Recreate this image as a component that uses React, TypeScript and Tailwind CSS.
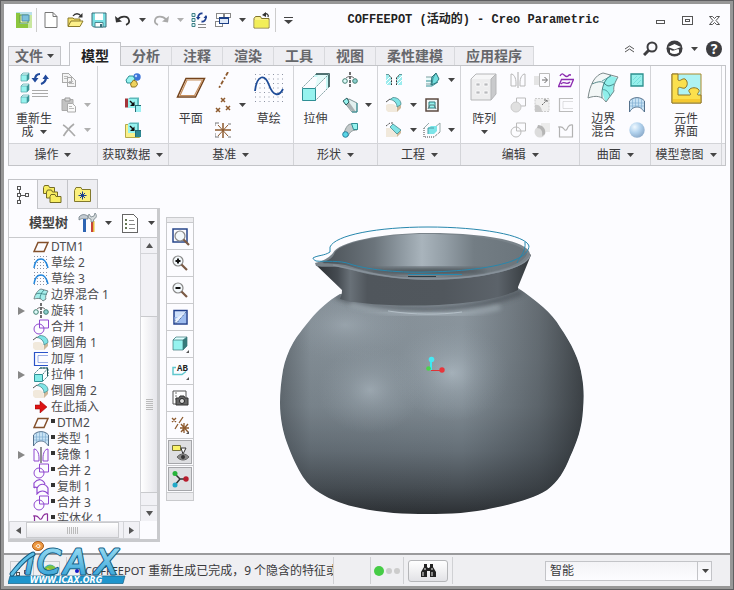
import type { ReactNode } from 'react';
import clsx from 'clsx';

type Kids = { children: ReactNode };

const TEAL = '#2f8f95';
const CYAN = '#96f3ef';
const BROWN = '#8d5a2e';

function Svg({ w, h, crisp, children }: Kids & { w: number; h: number; crisp?: boolean }) {
  return (
    <svg
      width={w}
      height={h}
      viewBox={`0 0 ${w} ${h}`}
      fill="none"
      className="shrink-0"
      shapeRendering={crisp ? 'crispEdges' : undefined}
      aria-hidden="true"
    >
      {children}
    </svg>
  );
}

function Caret({ dim }: { dim?: boolean }) {
  return <Svg w={7} h={4}><path d="M0 0h7L3.5 4z" fill={dim ? '#b0b0b0' : '#444'} /></Svg>;
}

/* ---------- quick access icons ---------- */

const AppIcon = () => (
  <Svg w={16} h={16}>
    <path d="M0 0h16v16H0z" fill="#b9e0ea" />
    <path d="M0 1h4v11h10v4H0z" fill="#8dc63f" />
    <path d="M12 3h4v13h-4z" fill="#c9e7a0" />
    <path d="M4 3h8v8H4z" fill="#f5f6b4" stroke="#5e9c46" />
    <path d="M6 3h7v6H6z" fill="#7cc0dc" stroke="#4f8fb0" />
  </Svg>
);
const NewIcon = () => (
  <Svg w={14} h={16}>
    <path d="M1 .5h8l4 4v11H1z" fill="#fff" stroke="#777" />
    <path d="M9 .5v4h4" stroke="#777" />
  </Svg>
);
const OpenIcon = () => (
  <Svg w={17} h={16}>
    <path d="M1 14V6h5l1 1h6v3" fill="#f4e06a" stroke="#8a7a2a" />
    <path d="M1 14.5L4 9h12l-3 5.5z" fill="#fdf08a" stroke="#8a7a2a" />
    <path d="M6 4c2-3 6-3 8 0" stroke="#333" strokeWidth="1.3" />
    <path d="M15.5 1v4.5H11z" fill="#333" />
  </Svg>
);
const SaveIcon = () => (
  <Svg w={16} h={16}>
    <path d="M1 1h14v14H2.5L1 13.5z" fill="#79dfe3" stroke="#3b6d78" />
    <path d="M4 1.5h8V8H4z" fill="#fff" />
    <path d="M4 10.5h8V15H4z" fill="#fff" stroke="#4b8790" />
    <path d="M9 12h2v3H9z" fill="#3b6d78" />
  </Svg>
);
const UndoIcon = ({ redo }: { redo?: boolean }) => (
  <Svg w={16} h={12}>
    <g transform={redo ? 'matrix(-1 0 0 1 16 0)' : undefined}>
      <path d="M3 5.5C6 1.5 13 1.5 14 6c.5 2-.8 4-3 4.800" stroke={redo ? '#aaa' : '#333'} strokeWidth="1.8" />
      <path d="M0 2l1 6.500 6-1z" fill={redo ? '#aaa' : '#333'} />
    </g>
  </Svg>
);
const RegenSmallIcon = () => (
  <Svg w={16} h={17}>
    {[1, 6, 11].map((y) => <path key={y} d={`M1 ${y + 0.5}h3v3H1z`} fill="#d8f5f5" stroke="#3f7f86" />)}
    <path d="M7 12.5h8M7 15.5h8" stroke="#888" />
    <path d="M7 6c0-3 2-5 4.500-4.500M15 5c0 3-2 5-4.500 4.500" stroke="#1e3f90" strokeWidth="1.800" />
    <path d="M5 5h4.500L7 8zM12.500 6H17l-2-3z" fill="#1e3f90" />
  </Svg>
);
const WindowsIcon = () => (
  <Svg w={16} h={16} crisp>
    <path d="M1.5 1.5h7v5h-7zM9.5 1.5h6v4h-6zM.5 9.5h7v5h-7z" fill="#fff" stroke="#888" />
    <path d="M4.5 5.5h9v6h-9z" fill="#dfe9f8" stroke="#1d3f86" />
    <path d="M4 5h10v2H4z" fill="#1d3f86" />
  </Svg>
);
const FolderBackIcon = () => (
  <Svg w={17} h={17}>
    <path d="M1 6.5l1.500-2h5l1 2H16V16H1z" fill="#faf08c" stroke="#80752c" />
    <path d="M1.500 8h14v7.500h-14z" fill="#f2ee58" />
    <path d="M15 5c1-2-1-4-3.500-3" stroke="#333" strokeWidth="1.3" />
    <path d="M9 3l4-3v5z" fill="#333" />
  </Svg>
);

/* ---------- ribbon icons ---------- */

const RegenIcon = () => (
  <Svg w={30} h={32}>
    {[1, 12, 23].map((y) => (
      <g key={y}>
        <path d={`M2 ${y + 2}l2-2h6v6l-2 2z`} fill="#2d8e91" />
        <path d={`M2 ${y + 2}h6v6H2z`} fill={CYAN} />
        <path d={`M2 ${y + 2}l2-2h6l-2 2z`} fill="#d9fbfa" />
        <path d={`M2 ${y + 2}h6v6H2zM2 ${y + 2}l2-2h6v6l-2 2`} stroke="#5aa5a8" strokeWidth=".7" />
      </g>
    ))}
    <path d="M16 8c0-4 2-6 5-6M27 5c0 4-2 6-5 7" stroke="#214a9c" strokeWidth="2.200" />
    <path d="M12.500 6h7L16 10.500zM23.500 7H30l-3.500-4.500z" fill="#214a9c" />
    <path d="M13 18.5h16M13 21.5h16M13 24.5h16" stroke="#aaa" />
  </Svg>
);
const CopyIcon = () => (
  <Svg w={16} h={16} crisp>
    <path d="M1.5 1.5h6l3 3v6h-9zM6.5 5.5h5l3 3v6h-8z" fill="#f4f4f4" stroke="#aaa" />
    <path d="M3 4.5h4M3 6.5h3M8 9.5h4M8 11.5h5" stroke="#bbb" />
  </Svg>
);
const PasteIcon = () => (
  <Svg w={16} h={16}>
    <path d="M1 2.5h11v11H1z" fill="#c2c2c2" stroke="#aaa" />
    <path d="M4 1h5v3H4z" fill="#ddd" stroke="#999" />
    <path d="M6.5 6.5h5l3 3V15h-8z" fill="#fafafa" stroke="#aaa" />
    <path d="M8 9.5h3M8 11.5h5" stroke="#bbb" />
  </Svg>
);
const DeleteIcon = () => (
  <Svg w={14} h={14}><path d="M1 2c3 1 8 7 12 11M12 1C8 4 4 9 1.5 13" stroke="#aaa" strokeWidth="1.7" /></Svg>
);
const BlobsIcon = () => (
  <Svg w={16} h={16}>
    <circle cx="12" cy="5" r="3.7" fill="#3c74d8" />
    <circle cx="11" cy="4" r="1.2" fill="#b8d2ff" />
    <path d="M1 8l3-4h4l2 3-3 4H2z" fill={CYAN} stroke={TEAL} />
    <path d="M8.500 8l3 1.500 1 3-2 2.500H6.500l-1-3z" fill="#efd35c" stroke="#8f7426" />
  </Svg>
);
const CopyGeomIcon = ({ yellow }: { yellow?: boolean }) => (
  <Svg w={16} h={16}>
    {yellow && <path d="M.5 2.500h4v8h10v5H.5z" fill="#f9f08a" stroke="#b5a94a" />}
    <path d="M3 2l2-1.500h9V9l-2 2z" fill="#5fb9bb" />
    <path d="M3 2h9v9H3z" fill={CYAN} />
    {!yellow && <path d="M0 1.500h3v9H0z" fill="#a3353a" />}
    <path d="M5 4l4 4" stroke="#111" strokeWidth="1.5" />
    <path d="M9.500 4.500V9H5z" fill="#111" />
    <path d="M10 8h6v7h-6z" fill={yellow ? '#2c8792' : '#9df0f2'} />
    <path d="M10 8.500h6M10.500 8v7" stroke="#256b74" />
  </Svg>
);
const PlaneIcon = () => (
  <Svg w={30} h={22}>
    <path d="M10 1.500h18.500L19.500 20H1.500z" stroke="#74431b" strokeWidth="1.500" />
    <path d="M11 3h15.500l-8 15.500H4z" stroke="#c68f5e" strokeWidth="1.200" />
  </Svg>
);
const AxisIcon = () => <Svg w={16} h={16}><path d="M13 0L4 16" stroke={BROWN} strokeWidth="1.800" strokeDasharray="4 2 2 2" /></Svg>;
const PointsIcon = () => (
  <Svg w={16} h={16}>
    <path d="M6 1l4 4m0-4L6 5M1 11l4 4m0-4l-4 4M11 9l4 4m0-4l-4 4" stroke={BROWN} strokeWidth="1.5" />
  </Svg>
);
const CsysIcon = () => (
  <Svg w={16} h={16}>
    <path d="M0 8h16M8 1v15" stroke={BROWN} strokeWidth="1.5" />
    <path d="M3 3l10 11M13 3L3 14" stroke={BROWN} />
    <path d="M0 1h4M0 1v3M16 2h-3M0 15h4M0 11v4M16 15h-3" stroke="#777" />
  </Svg>
);
const Dots = ({ n, step }: { n: number; step: number }) => (
  <>
    {Array.from({ length: n * n }, (_, i) => (
      <rect key={i} x={(i % n) * step} y={Math.floor(i / n) * step} width="1" height="1" fill="#8d93a3" />
    ))}
  </>
);
const SketchIcon = () => (
  <Svg w={30} h={30}>
    <g transform="translate(1 1)"><Dots n={7} step={4.5} /></g>
    <path d="M1 18C3 1 11 1 15 12s10 12 14 4" stroke="#1d4b97" strokeWidth="1.800" />
  </Svg>
);
const ExtrudeIcon = () => (
  <Svg w={30} h={30}>
    <path d="M15 1h13v13l-3 3V4H12z" fill="#c8f8f6" />
    <path d="M17 1h11L14 15z" fill="#e4fbfa" />
    <path d="M15 1h13v13" stroke="#1c4446" strokeWidth="1.5" />
    <path d="M1 15L15 1M14 15L28 1M14 28L28 14" stroke="#7a9a9c" strokeDasharray="2 1" />
    <path d="M1.5 15.5h13v12h-13z" fill={CYAN} stroke={TEAL} />
  </Svg>
);
const RevolveIcon = () => (
  <Svg w={16} h={16}>
    <path d="M8 0v16" stroke="#111" strokeWidth="1.2" strokeDasharray="3 1" />
    <path d="M4 6c2-2 6-2 8 0" stroke="#666" />
    <circle cx="3" cy="9" r="2.300" fill="#dffafa" stroke="#3f7f70" />
    <circle cx="13" cy="9" r="2.300" fill="#8ccfd0" stroke="#3f7f70" />
  </Svg>
);
const SweepIcon = () => (
  <Svg w={16} h={16}>
    <path d="M2 5l5-3 8 4v9H10z" fill="#e2f0ef" stroke="#7e9495" />
    <path d="M3 7l8 8h3L7 5z" fill="#a9b1b2" />
    <path d="M1 4l4-3 2 4-3 3z" fill={CYAN} stroke="#2d5c5e" />
    <path d="M15 6v9h-5" stroke={TEAL} />
  </Svg>
);
const BlendIcon = () => (
  <Svg w={16} h={16}>
    <path d="M2 11C4 5 6 2 9 2h6v6c-5 0-7 2-9 6z" fill="#c3c9ca" stroke="#8a9798" />
    <path d="M9.500 1.500h6v6h-4z" fill={CYAN} stroke={TEAL} />
    <circle cx="3.500" cy="12.500" r="2.800" fill="#59d6e6" stroke="#287d9b" />
  </Svg>
);
const HoleIcon = () => (
  <Svg w={16} h={14}>
    <path d="M0 2h3l2 2v8H0zM16 2h-3l-2 2v8h5z" fill="#9cecee" />
    <path d="M0 8l5-5M0 12l5-5M11 8l5-5M11 12l5-5" stroke="#fff" />
    <path d="M3 2.500l2.500 2V12M13 2.500l-2.500 2V12" stroke="#333" strokeDasharray="2 1" />
    <path d="M0 1.500h3M13 1.500h3" stroke="#66989a" />
  </Svg>
);
const RoundIcon = () => (
  <Svg w={16} h={16}>
    <path d="M0 8l2-1h4c4 0 5 3 5 8H2l-2-2z" fill="#f1e9dc" />
    <path d="M11 15l4-4V8l-4 2z" fill="#cdb899" />
    <path d="M4 2.500l3-2c5 0 8 3 8 7L11 10c0-4-3-7-7-7.500z" fill="#7fe4e6" stroke="#47888a" strokeWidth=".8" />
    <path d="M0 5l4-3" stroke="#555" />
  </Svg>
);
const ChamferIcon = () => (
  <Svg w={16} h={16}>
    <path d="M0 6h4l7 6v3H0z" fill="#f1e9dc" />
    <path d="M11 15l4-4V8l-4 4z" fill="#cdb899" />
    <path d="M4 5l3-3 8 6-4 4z" fill="#7fe4e6" stroke="#47888a" strokeWidth=".8" />
    <path d="M0 4l4-3h3" stroke="#555" strokeDasharray="2 1" />
  </Svg>
);
const DraftIcon = () => (
  <Svg w={16} h={16}>
    <path d="M2 5h6v7H2" fill="#eafafa" stroke="#7c9fa0" />
    <path d="M2 9h6M2 14h6l6-4" stroke={TEAL} />
    <path d="M8 5l4-4 3 6-3 4-5 2z" fill="#72dfe0" stroke="#2d7479" />
    <path d="M12 1l-3 5-1 7" stroke="#2d7479" strokeWidth=".7" />
  </Svg>
);
const ShellIcon = () => (
  <Svg w={14} h={14}>
    <path d="M1 1h12v12H1z" fill="#f3f8f8" stroke="#5c4a42" strokeWidth="1.500" />
    <path d="M4 4h6v6H4z" fill={CYAN} stroke="#2e7c81" />
    <path d="M3 11l2-4h4l2 4" stroke="#5c7a7c" />
  </Svg>
);
const RibIcon = () => (
  <Svg w={18} h={16}>
    <path d="M1 6v9h10l6-5" stroke="#444" strokeDasharray="1 1" />
    <path d="M1 6l5-5M11 6l6-5v9" stroke="#9aa" />
    <path d="M5 6l3-2h6v5l-3 3H5z" fill="#7ce4e8" />
    <path d="M5 12V6h6" stroke="#4a9ea4" />
  </Svg>
);
const PatternIcon = () => (
  <Svg w={30} h={30}>
    <path d="M2 6l5-5h20v20l-5 6H2z" fill="#c9cacc" />
    <path d="M2 6l5-5h20l-5 5z" fill="#f6f6f7" />
    <path d="M2 6h20v21H2z" fill="#ededee" />
    {[12, 20].map((y) => [9, 17].map((x) => (
      <path key={`${x}-${y}`} d={`M${x - 2} ${y - 2}h4v3h-4z`} fill="#b9babd" stroke="#fff" strokeWidth=".7" />
    )))}
    <path d="M2 27V6l5-5h20v20l-5 6zM22 27V6l5-5" stroke="#b5b6b8" />
  </Svg>
);
const MirrorIcon = ({ c = '#b8b8b8' }: { c?: string }) => (
  <Svg w={16} h={16}>
    <path d="M1 14V2c3 0 5 4 5 9v3zM15 14V2c-3 0-5 4-5 9v3z" stroke={c} />
    <path d="M8 0v16" stroke={c === '#b8b8b8' ? '#aaa' : '#222'} />
  </Svg>
);
const ExtendIcon = () => (
  <Svg w={16} h={14}>
    <path d="M0 3h6v9H0z" fill="#e4e4e4" /><path d="M5.5.5h10v13h-10z" stroke="#bbb" />
    <path d="M8 7h5M10.500 4l3 3-3 3" stroke="#666" />
  </Svg>
);
const OffsetIcon = () => (
  <Svg w={16} h={16}>
    <path d="M2 4c3-6 5 3 8 0 2-2 2-1 3-1" stroke="#8c2bb0" strokeWidth="1.4" />
    <path d="M3.500 7.500h12l-3 7H.5zM3 12c3-4 5 2 9-2" stroke="#8c2bb0" strokeWidth="1.300" />
  </Svg>
);
const MergeIcon = ({ c = '#bbb', fill = 'none' }: { c?: string; fill?: string }) => (
  <Svg w={16} h={16}>
    <path d="M6.500 1h9v8h-9z" stroke={c} />
    <circle cx="6" cy="10" r="5" stroke={fill === 'none' ? c : '#ccc'} fill={fill} />
  </Svg>
);
const TrimIcon = () => (
  <Svg w={16} h={16}>
    <path d="M1 1.500h14v13H1z" fill="#efefef" stroke="#ccc" strokeDasharray="2 1" />
    <path d="M1 8c4-1 7 3 7 7H1z" fill="#c9c9c9" /><path d="M8 8l5-5M10 3h3v3" stroke="#666" strokeDasharray="2 1" />
  </Svg>
);
const ThickenIcon = ({ c = '#bbb' }: { c?: string }) => (
  <Svg w={16} h={16}><path d="M15 1.500H1.500v13H15" stroke={c} strokeWidth="1.2" /><path d="M15 4.500H5v7h10" stroke={c} opacity=".45" /></Svg>
);
const ProjectIcon = () => (
  <Svg w={16} h={16}>
    <path d="M7 1h9v9H7z" fill="#ececec" /><circle cx="6" cy="10" r="5.500" fill="#dcdcdc" />
    <path d="M4 3c5 0 8 4 7 9l-3 2c1-5-1-8-5-8z" fill="#b5b5b5" />
  </Svg>
);
const SolidifyIcon = ({ c = '#b2b2b2' }: { c?: string }) => (
  <Svg w={16} h={16}><path d="M0 5c3 0 4-1 6 2 2 3 3 0 4-2 2-3 3-2 5-2M1.500 5v10h13V3" stroke={c} strokeWidth="1.2" /></Svg>
);
const BoundaryIcon = () => (
  <Svg w={32} h={32}>
    <path d="M1 26C3 12 8 3 16 1l15 4c-3 5-5 10-4 14l-8 11c-4-6-10-7-18-4z" fill="#f3f7f7" />
    <path d="M17 9L24 4l7 2c-3 6-5 9-4 14l-8 10c-5-8-3-15-2-21z" fill="#90efeb" />
    <path d="M1 26C3 12 8 3 16 1l15 4c-3 5-5 10-4 14l-8 11c-4-6-10-7-18-4z" stroke="#7d8a8b" />
    <path d="M5 12c7-3 10-3 13 0s5 2 9 0M24 3c-6 4-10 12-9 23" stroke="#2c6a6b" strokeWidth=".8" />
    <path d="M15 9L24 4M15 18c2-1 6 0 8 6" stroke="#3d9293" strokeWidth=".8" />
  </Svg>
);
const FillIcon = () => (
  <Svg w={14} h={14}><path d="M1 1h12v12H1z" fill="#97f0ec" stroke="#2b8f8d" strokeWidth="1.3" /><path d="M3 11l8-8M3 7l4-4M7 11l4-4" stroke="#75dfdb" /></Svg>
);
const StyleIcon = () => (
  <Svg w={16} h={16}>
    <path d="M.5 4C4-.5 12-.5 15.5 4v11c-3-4-5-5-7.500-5s-5 1-7.500 5z" fill="#c7e2f4" stroke="#55718c" />
    <path d="M3.5 2v9M6.5 1v9M9.5 1v9M12.5 2v9M1 6h14M1 9h14" stroke="#7ba9cf" strokeWidth=".6" />
  </Svg>
);
const SphereIcon = () => (
  <Svg w={16} h={16}>
    <defs>
      <radialGradient id="sphere" cx=".35" cy=".3" r=".75">
        <stop offset="0" stopColor="#f0f9ff" /><stop offset=".5" stopColor="#b3d3ee" /><stop offset="1" stopColor="#8aa9c9" />
      </radialGradient>
    </defs>
    <circle cx="8" cy="8" r="7.7" fill="url(#sphere)" />
  </Svg>
);
const ComponentIcon = () => (
  <Svg w={31} h={31}>
    <path d="M1 1h29v29H1z" fill="#aef3f4" stroke="#aa8a2a" />
    <path d="M1 1h6v6c2 2 4-2 7-1 3 2 3 7 0 9-3 1-5-2-7 0v7h12c2-1-2-3-1-5 2-3 8-3 10 0 1 2-3 4-1 5h3v8H1z" fill="#fbe04d" stroke="#8d742a" />
    <path d="M2 26h27v3H2z" fill="#f5c931" />
  </Svg>
);

/* ---------- ribbon layout ---------- */

function Tool({ label, wide, children }: Kids & { label: string; wide?: boolean }) {
  return (
    <button type="button" aria-label={label} className={clsx('flex h-[25px] items-center justify-center', wide ? 'w-6' : 'w-5')}>
      {children}
    </button>
  );
}

function Drop({ label, dim, className = 'w-3.5' }: { label: string; dim?: boolean; className?: string }) {
  return (
    <button type="button" aria-label={`${label}选项`} className={clsx('flex h-[25px] items-center justify-center', className)}>
      <Caret dim={dim} />
    </button>
  );
}

const Gap = () => <div className="h-[25px]" />;

function BigTool({ icon, lines, caret, className = 'w-11' }: { icon: ReactNode; lines: string[]; caret?: boolean; className?: string }) {
  return (
    <button type="button" className={clsx('flex flex-col items-center pt-[5px] leading-[13px]', className)}>
      <span className="flex h-8 items-center justify-center">{icon}</span>
      <span className="mt-2 whitespace-nowrap">
        {lines.map((line, i) => (
          <span key={line} className="flex items-center justify-center gap-1.5">
            {line}
            {caret && lines.length > 1 && i === lines.length - 1 && <Caret />}
          </span>
        ))}
        {caret && lines.length === 1 && <span className="flex h-[13px] items-center justify-center"><Caret /></span>}
      </span>
    </button>
  );
}

function Group({ title, className, children }: Kids & { title: string; className?: string }) {
  return (
    <section aria-label={title} className="flex flex-col border-r border-[#d3d4d8]">
      <div className={clsx('flex h-[77px] pt-px', className)}>{children}</div>
      <button type="button" className="flex h-[22px] items-center justify-center gap-1.5 border-t border-[#d3d4d8] bg-[#efeff3] whitespace-nowrap">
        {title}
        <Caret />
      </button>
    </section>
  );
}

function Ribbon() {
  return (
    <div className="mx-1 grid grid-cols-[89fr_71fr_125fr_85fr_83fr_119fr_71fr_71fr_3fr] border border-[#c3c4c8]">
      <Group title="操作">
        <BigTool icon={<RegenIcon />} lines={['重新生', '成']} caret className="w-[50px]" />
        <div><Tool label="复制"><CopyIcon /></Tool><Tool label="粘贴"><PasteIcon /></Tool><Tool label="删除"><DeleteIcon /></Tool></div>
        <div><Gap /><Drop label="粘贴" dim className="w-4" /><Drop label="删除" dim className="w-4" /></div>
      </Group>
      <Group title="获取数据" className="justify-center">
        <div><Tool label="用户定义特征"><BlobsIcon /></Tool><Tool label="复制几何"><CopyGeomIcon /></Tool><Tool label="收缩包络"><CopyGeomIcon yellow /></Tool></div>
      </Group>
      <Group title="基准">
        <BigTool icon={<PlaneIcon />} lines={['平面']} />
        <div><Tool label="轴"><AxisIcon /></Tool><Tool label="点"><PointsIcon /></Tool><Tool label="坐标系"><CsysIcon /></Tool></div>
        <div><Gap /><Drop label="点" className="w-5" /></div>
        <BigTool icon={<SketchIcon />} lines={['草绘']} className="w-8" />
      </Group>
      <Group title="形状">
        <BigTool icon={<ExtrudeIcon />} lines={['拉伸']} />
        <div><Tool label="旋转" wide><RevolveIcon /></Tool><Tool label="扫描" wide><SweepIcon /></Tool><Tool label="扫描混合" wide><BlendIcon /></Tool></div>
        <div><Gap /><Drop label="扫描" /></div>
      </Group>
      <Group title="工程" className="pl-1">
        <div><Tool label="孔" wide><HoleIcon /></Tool><Tool label="倒圆角" wide><RoundIcon /></Tool><Tool label="倒角" wide><ChamferIcon /></Tool></div>
        <div><Gap /><Drop label="倒圆角" /><Drop label="倒角" /></div>
        <div><Tool label="拔模" wide><DraftIcon /></Tool><Tool label="壳" wide><ShellIcon /></Tool><Tool label="筋" wide><RibIcon /></Tool></div>
        <div><Drop label="拔模" /><Gap /><Drop label="筋" /></div>
      </Group>
      <Group title="编辑" className="pl-px">
        <BigTool icon={<PatternIcon />} lines={['阵列']} caret />
        <div><Tool label="镜像" wide><MirrorIcon /></Tool><Tool label="合并" wide><MergeIcon fill="#e0e0e0" /></Tool><Tool label="相交" wide><MergeIcon /></Tool></div>
        <div><Tool label="延伸" wide><ExtendIcon /></Tool><Tool label="修剪" wide><TrimIcon /></Tool><Tool label="投影" wide><ProjectIcon /></Tool></div>
        <div><Tool label="偏移" wide><OffsetIcon /></Tool><Tool label="加厚" wide><ThickenIcon /></Tool><Tool label="实体化" wide><SolidifyIcon /></Tool></div>
      </Group>
      <Group title="曲面" className="pl-px">
        <BigTool icon={<BoundaryIcon />} lines={['边界', '混合']} />
        <div><Tool label="填充" wide><FillIcon /></Tool><Tool label="样式" wide><StyleIcon /></Tool><Tool label="自由式" wide><SphereIcon /></Tool></div>
      </Group>
      <Group title="模型意图" className="justify-center">
        <BigTool icon={<ComponentIcon />} lines={['元件', '界面']} />
      </Group>
      <div className="flex flex-col"><div className="h-[77px]" /><div className="h-[22px] border-t border-[#d3d4d8] bg-[#efeff3]" /></div>
    </div>
  );
}

/* ---------- title bar and tabs ---------- */

function QuickItem({ label, children }: Kids & { label: string }) {
  return <button type="button" aria-label={label} className="flex w-6 items-center justify-center">{children}</button>;
}

function TitleBar() {
  return (
    <header className="flex h-8 items-stretch pr-0.5 pl-2">
      <QuickItem label="Creo"><AppIcon /></QuickItem>
      <div className="mt-1 mr-0.5 h-6 w-px bg-[#ccc]" />
      <QuickItem label="新建"><NewIcon /></QuickItem>
      <QuickItem label="打开"><OpenIcon /></QuickItem>
      <QuickItem label="保存"><SaveIcon /></QuickItem>
      <QuickItem label="撤消"><UndoIcon /></QuickItem>
      <button type="button" aria-label="撤消列表" className="flex w-3.5 items-center justify-center"><Caret /></button>
      <QuickItem label="重做"><UndoIcon redo /></QuickItem>
      <button type="button" aria-label="重做列表" className="flex w-3.5 items-center justify-center"><Caret dim /></button>
      <QuickItem label="重新生成"><RegenSmallIcon /></QuickItem>
      <QuickItem label="窗口"><WindowsIcon /></QuickItem>
      <button type="button" aria-label="窗口列表" className="flex w-3.5 items-center justify-center"><Caret /></button>
      <QuickItem label="关闭"><FolderBackIcon /></QuickItem>
      <div className="mt-1 ml-0.5 h-6 w-px bg-[#ccc]" />
      <QuickItem label="自定义快速访问工具栏">
        <Svg w={9} h={7}><path d="M0 .5h9" stroke="#444" /><path d="M0 3h9L4.5 7z" fill="#444" /></Svg>
      </QuickItem>
      <h1 className="flex-1 self-center text-center font-['Liberation_Mono','Noto_Sans_CJK_SC',monospace] text-xs font-bold whitespace-nowrap text-[#222]">
        COFFEEPOT (活动的) - Creo Parametric
      </h1>
      <button type="button" aria-label="最小化" className="flex w-[27px] items-center justify-center pt-1">
        <Svg w={9} h={4} crisp><path d="M.5.5h8v3h-8z" stroke="#555" /></Svg>
      </button>
      <button type="button" aria-label="最大化" className="flex w-[27px] items-center justify-center">
        <Svg w={11} h={9} crisp><path d="M.5.5h10v8H.5zM3.5 3.5h4v2h-4z" stroke="#555" /></Svg>
      </button>
      <button type="button" aria-label="关闭窗口" className="flex w-[27px] items-center justify-center">
        <Svg w={11} h={9}><path d="M.5.5h3l2 2 2-2h3l-3.500 4 3.500 4h-3l-2-2-2 2h-3L4 4.500z" stroke="#555" /></Svg>
      </button>
    </header>
  );
}

const tabs = ['模型', '分析', '注释', '渲染', '工具', '视图', '柔性建模', '应用程序'];

function TabBar() {
  return (
    <nav className="mx-1 flex h-[29px] items-end text-sm leading-[18px] font-bold text-[#66676b]">
      <button type="button" className="mr-2 flex h-[19px] items-center gap-1 border border-b-0 border-[#c3c4c8] bg-[#eeeef2] px-1.5">
        文件 <Caret />
      </button>
      <div role="tablist" className="flex items-end">
        {tabs.map((tab, i) => (
          <button
            key={tab}
            type="button"
            role="tab"
            aria-selected={i === 0}
            className={clsx(
              'px-[11px] whitespace-nowrap',
              i === 0
                ? 'relative -mb-px h-6 border border-b-0 border-[#c3c4c8] bg-[#fcfcff] pt-0.5 text-[#222]'
                : 'h-[19px] border-t border-r border-t-[#c3c4c8] border-r-[#d8d9dd] bg-[#eeeef2]',
            )}
          >
            {tab}
          </button>
        ))}
      </div>
      <div className="mr-1 ml-auto flex items-center gap-2 self-start pt-1">
        <button type="button" aria-label="最小化功能区">
          <Svg w={11} h={8}><path d="M1 4l4.500-3L10 4M1 7l4.500-3L10 7" stroke="#555" /></Svg>
        </button>
        <button type="button" aria-label="搜索">
          <Svg w={15} h={15}><circle cx="9" cy="6" r="4.5" stroke="#3d3d40" strokeWidth="2" /><path d="M6 9l-5 5" stroke="#3d3d40" strokeWidth="3" /></Svg>
        </button>
        <button type="button" aria-label="学习中心">
          <Svg w={17} h={17}>
            <circle cx="8.5" cy="8.5" r="8" fill="#3d3d40" />
            <path d="M2 7l6.500-3L15 7l-6.500 2.500z" fill="#fff" />
            <path d="M4 9.500c1 .5 2 1.500 4 1s3-1.500 5-1v3c-3 2-6 2-9 0z" fill="#fff" />
          </Svg>
        </button>
        <button type="button" aria-label="学习中心选项"><Caret /></button>
        <button type="button" aria-label="帮助" className="flex size-4 items-center justify-center rounded-full bg-[#3d3d40] text-sm leading-4 font-bold text-white">?</button>
      </div>
    </nav>
  );
}

/* ---------- model tree ---------- */

const treeIcons = {
  plane: <Svg w={16} h={12}><path d="M5 1.5h10l-4 9H1z" stroke="#84502b" strokeWidth="1.5" /></Svg>,
  sketch: (
    <Svg w={16} h={16}>
      <g transform="translate(1 1)"><Dots n={5} step={3} /></g>
      <path d="M1 13c1-8 5-9 7-9s5 1 7 9" stroke="#2387dd" strokeWidth="1.5" />
    </Svg>
  ),
  boundary: (
    <Svg w={16} h={16}>
      <path d="M1 12c1-5 4-9 7-10l7 2c-2 3-3 6-2 8l-3 2c-2-3-5-3-9-2z" fill="#a5eeeb" stroke="#77888a" />
      <path d="M3 7c5-2 6 1 11 0M11 3C8 6 7 9 7 12" stroke="#317778" strokeWidth=".8" />
    </Svg>
  ),
  revolve: <RevolveIcon />,
  merge: <MergeIcon c="#9049d0" />,
  round: <RoundIcon />,
  thicken: <ThickenIcon c="#2a53c8" />,
  extrude: (
    <Svg w={16} h={16}>
      <path d="M7 1h8v8l-5 5M7 1L1 7M15 1l-5 6" stroke="#447f84" strokeDasharray="2 1" />
      <path d="M7 1h7.500v8" stroke="#235659" /><path d="M1.5 7.5h8v7h-8z" fill="#83ece9" stroke={TEAL} />
    </Svg>
  ),
  insert: <Svg w={12} h={12}><path d="M0 4h5V0l7 6-7 6V8H0z" fill="#dd1414" stroke="#920000" strokeWidth=".5" /></Svg>,
  style: <StyleIcon />,
  mirror: <MirrorIcon c="#9049d0" />,
  copy: <Svg w={16} h={16}><path d="M1 9V4c4-5 9-4 11 1M4 15V9c3-5 8-5 11 0v6c-3-4-8-4-11 0zM1 9c1-1 2-1 3 0" stroke="#9049d0" strokeWidth="1.2" /></Svg>,
  solidify: <SolidifyIcon c="#8b2f9b" />,
};

type TreeItem = { icon: keyof typeof treeIcons; name: string; fold?: boolean; hidden?: boolean };

const tree: TreeItem[] = [
  { icon: 'plane', name: 'DTM1' },
  { icon: 'sketch', name: '草绘 2' },
  { icon: 'sketch', name: '草绘 3' },
  { icon: 'boundary', name: '边界混合 1' },
  { icon: 'revolve', name: '旋转 1', fold: true },
  { icon: 'merge', name: '合并 1' },
  { icon: 'round', name: '倒圆角 1' },
  { icon: 'thicken', name: '加厚 1' },
  { icon: 'extrude', name: '拉伸 1', fold: true },
  { icon: 'round', name: '倒圆角 2' },
  { icon: 'insert', name: '在此插入' },
  { icon: 'plane', name: 'DTM2', hidden: true },
  { icon: 'style', name: '类型 1', hidden: true },
  { icon: 'mirror', name: '镜像 1', fold: true, hidden: true },
  { icon: 'merge', name: '合并 2', hidden: true },
  { icon: 'copy', name: '复制 1', hidden: true },
  { icon: 'merge', name: '合并 3', hidden: true },
  { icon: 'solidify', name: '实体化 1', hidden: true },
];

const Folder = ({ x = 0, y = 0 }: { x?: number; y?: number }) => (
  <path d={`M${x + 0.5} ${y + 2.5}l1-2h4l1 2h5v6h-11z`} fill="#f8ee61" stroke="#756c25" />
);

function TreePanel() {
  return (
    <aside className="ml-1 flex w-[152px] shrink-0 flex-col pt-[13px]">
      <div role="tablist" className="flex h-[29px]">
        <button type="button" role="tab" aria-selected="true" aria-label="模型树" className="relative -mb-px flex h-[30px] w-[30px] items-center justify-center border border-b-0 border-[#c3c4c8] bg-[#fcfcff]">
          <Svg w={14} h={20} crisp>
            <path d="M1.5 1.5h3v3h-3zM1.5 8.5h3v3h-3zM1.5 15.5h3v3h-3zM9.5 8.5h3v3h-3zM3 5v3M3 12v3M5 10.5h4" stroke="#555" />
          </Svg>
        </button>
        <button type="button" role="tab" aria-selected="false" aria-label="文件夹浏览器" className="flex w-[30px] items-center justify-center border-t border-r border-[#c3c4c8] bg-[#eeeef2]">
          <Svg w={19} h={19}><Folder /><Folder x={3} y={4.5} /><Folder x={6.5} y={9} /></Svg>
        </button>
        <button type="button" role="tab" aria-selected="false" aria-label="收藏夹" className="flex w-[30px] items-center justify-center border-t border-r border-[#c3c4c8] bg-[#eeeef2]">
          <Svg w={17} h={15}>
            <path d="M.5 3.5l1.500-3h5l1 2h8.500v12H.5z" fill="#fbf07d" stroke="#82792c" />
            <path d="M8.5 4.5v8M4.5 8.5h8M6 6l5 5M11 6l-5 5" stroke="#193e91" />
          </Svg>
        </button>
      </div>
      <div className="border border-r-[3px] border-b-[3px] border-[#c9cacd]">
        <div className="flex h-[29px] items-center border-b border-[#c9cacd] pl-5">
          <h2 className="text-[13px] font-bold text-[#444]">模型树</h2>
          <button type="button" aria-label="设置" className="ml-2.5 flex items-center gap-2">
            <Svg w={19} h={20}>
              <path d="M1 4c3-3 5-3 9-1v3H6c-2-1-3 0-5 1z" fill="#c3cbd2" stroke="#61707a" strokeWidth=".7" />
              <path d="M5 6h3v13H5z" fill="#2e65b3" /><path d="M13 8h2v11h-2z" fill="#c8433a" /><path d="M15 8h1.500v11H15z" fill="#e8b93a" />
              <path d="M11 1l2 3 3-1 1-3c2 2 2 5-1 6l-1 3h-2V6c-3 0-3-3-2-5z" fill="#d5dbdd" stroke="#65757c" strokeWidth=".7" />
            </Svg>
            <Caret />
          </button>
          <button type="button" aria-label="显示" className="ml-2.5 flex items-center gap-2.5">
            <Svg w={16} h={19} crisp>
              <path d="M.5.5h11l4 4v14H.5z" fill="#fff" stroke="#666" />
              <path d="M3 5h2v2H3zM3 9h2v2H3zM3 13h2v2H3z" fill="#667755" /><path d="M7 6h5M7 10h6M7 14h6" stroke="#888" />
            </Svg>
            <Caret />
          </button>
        </div>
        <div className="grid h-[283px] grid-cols-[1fr_17px]">
          <ul className="overflow-hidden pt-px text-[#4c4c50]">
            {tree.map((item) => (
              <li key={item.name} className="flex h-4 items-center whitespace-nowrap">
                <span className="flex w-6 justify-center">
                  {item.fold && <Svg w={7} h={8}><path d="M0 0l7 4-7 4z" fill="#888" /></Svg>}
                </span>
                <span className="mr-0.5 flex h-4 w-4 items-center justify-center">{treeIcons[item.icon]}</span>
                {item.hidden && <span className="mr-0.5 mb-1 size-1 bg-[#333]" />}
                {item.name}
              </li>
            ))}
          </ul>
          <div className="flex flex-col border-l border-[#d3d4d8] bg-[#f1f1f5]">
            <button type="button" aria-label="向上滚动" className="flex h-4 items-center justify-center border-b border-[#d3d4d8]">
              <Svg w={7} h={5}><path d="M0 5h7L3.500 0z" fill="#555" /></Svg>
            </button>
            <div className="h-[62px]" />
            <div className="flex flex-1 flex-col items-center justify-center gap-px border-y border-[#c9cacd] bg-linear-to-r from-white to-[#e5e5ea]">
              {[0, 1, 2, 3, 4, 5].map((i) => <span key={i} className="h-px w-[7px] bg-[#bbb]" />)}
            </div>
            <div className="h-3" />
            <button type="button" aria-label="向下滚动" className="flex h-4 items-center justify-center border-t border-[#d3d4d8]">
              <Svg w={7} h={5}><path d="M0 0h7L3.500 5z" fill="#555" /></Svg>
            </button>
          </div>
        </div>
        <div className="mr-[17px] flex h-[18px] border border-[#d3d4d8] bg-[#f1f1f5]">
          <button type="button" aria-label="向左滚动" className="flex w-4 items-center justify-center">
            <Svg w={5} h={7}><path d="M5 0v7L0 3.500z" fill="#555" /></Svg>
          </button>
          <div className="mr-1 flex flex-1 items-center justify-center gap-px border border-[#c9cacd] bg-linear-to-b from-white to-[#e8e8ec]">
            {[0, 1, 2, 3, 4, 5].map((i) => <span key={i} className="h-[7px] w-px bg-[#bbb]" />)}
          </div>
          <button type="button" aria-label="向右滚动" className="flex w-4 items-center justify-center border-l border-[#d3d4d8]">
            <Svg w={5} h={7}><path d="M0 0v7l5-3.500z" fill="#555" /></Svg>
          </button>
        </div>
      </div>
    </aside>
  );
}

/* ---------- view toolbar ---------- */

const Lens = ({ children }: { children?: ReactNode }) => (
  <>
    <circle cx="7" cy="7" r="5" fill="#f3f8fb" stroke="#888" strokeWidth="1.2" />
    <path d="M10.5 10.5l5.500 5.500" stroke="#7a5a45" strokeWidth="2.200" />
    {children}
  </>
);
const Corner = () => <path d="M18 15v3h-3z" fill="#555" />;

const viewTools: { label: string; pressed?: boolean; icon: ReactNode }[] = [
  {
    label: '重新调整',
    icon: <><path d="M2 2h14v13H2z" stroke="#27458a" strokeWidth="1.5" /><g transform="translate(2 2)"><Lens /></g></>,
  },
  { label: '放大', icon: <Lens><path d="M4.5 7h5M7 4.5v5" stroke="#111" strokeWidth="2" /></Lens> },
  { label: '缩小', icon: <Lens><path d="M4.5 7h5" stroke="#111" strokeWidth="2" /></Lens> },
  {
    label: '重画',
    icon: (
      <>
        <path d="M3 2.500h13V16H3z" fill="#cfe0fa" stroke="#24428e" strokeWidth="1.5" />
        <path d="M3.500 9h7L15 4v11H3.500z" fill="#9dbcf0" />
        <path d="M15 4l-5 6-2 2-2 3H4v-4" fill="#e9f1fd" stroke="#34548c" strokeDasharray="1 1" />
      </>
    ),
  },
  {
    label: '显示样式',
    icon: <><path d="M2 5l3-3h11v9l-4 4H2z" fill="#357b7b" /><path d="M2 5h10v10H2z" fill={CYAN} /><path d="M2 5l3-3h11l-4 3z" fill="#dff" /><path d="M2 5h10v10H2zM2 5l3-3h11v9l-4 4M12 5l4-3" stroke="#367477" strokeWidth=".7" /><Corner /></>,
  },
  {
    label: '已命名视图',
    icon: <><path d="M5 5.500H2v7h9l4-3" stroke="#61c7ce" strokeWidth="1.500" /><text x="6" y="9" fontSize="9" fontWeight="bold" fill="#222" fontFamily="Liberation Mono, monospace">AB</text><Corner /></>,
  },
  {
    label: '视图管理器',
    icon: <><path d="M2 2h13v13H2z" fill="#fff" stroke="#555" /><path d="M4 4h2M4 7h2M4 10h2" stroke="#777" /><path d="M5 9h3l1-2h4l1 2h3v7H5z" fill="#666" stroke="#333" /><circle cx="11" cy="12" r="2.5" fill="#ddd" stroke="#222" /></>,
  },
  {
    label: '基准显示',
    icon: <><path d="M1 2l4 4m0-4L1 6M12 1L8 7M7 8l-3 5M10 8l7 8M17 8l-7 8M13 7v10M9 12h9" stroke={BROWN} strokeWidth="1.3" /><Corner /></>,
  },
  {
    label: '注释显示',
    pressed: true,
    icon: <><path d="M1.5 2.5h8v5h-8z" fill="#faf36a" stroke="#77733a" /><path d="M10 5h5l-3 6z" fill="#fff" stroke="#333" /><path d="M6 14c3-4 9-4 12 0-3 4-9 4-12 0z" fill="#888" stroke="#666" /><circle cx="12" cy="14" r="2" fill="#333" /></>,
  },
  {
    label: '旋转中心',
    pressed: true,
    icon: <><path d="M4 4l5 5h6M9 9l-5 6" stroke="#333" strokeWidth="1.5" /><circle cx="4" cy="3.5" r="2.5" fill="#27b43b" /><circle cx="4" cy="15" r="2.5" fill="#22a9c8" /><circle cx="15" cy="9" r="2.7" fill="#b71d2d" /></>,
  },
];

function ViewToolbar() {
  return (
    <div role="toolbar" aria-label="图形工具栏" className="mt-[51px] ml-1.5 flex w-7 shrink-0 flex-col self-start border border-[#c9cacd]">
      <div className="h-1 bg-[#ececef]" />
      {viewTools.map((tool) => (
        <button
          key={tool.label}
          type="button"
          aria-label={tool.label}
          aria-pressed={tool.pressed}
          className="h-[27px] border-t border-[#c9cacd] p-px"
        >
          <span className={clsx('flex h-full items-center justify-center', tool.pressed && 'border border-[#a5a6aa] bg-[#dedfe2]')}>
            <Svg w={19} h={19}>{tool.icon}</Svg>
          </span>
        </button>
      ))}
      <div className="h-2 border-t border-[#c9cacd] bg-[#ececef]" />
    </div>
  );
}

/* ---------- 3D model ---------- */

const BODY =
  'M340 294C328 301 318 310 310 320C302 330 297 336 293 343C288 352 285 360 283 370C281 382 280 392 280 403C280 418 283 432 287 443C292 457 297 467 303 477C308 484 313 489 320 493C331 500 345 505 360 508C382 513 405 514 427 514C450 514 472 513 493 508C513 504 532 499 547 490C558 482 565 470 570 457C577 442 582 428 583 410C584 398 584 388 582 377C580 360 571 343 560 327C556 320 550 313 543 307C535 300 527 294 518 288Z';

function Pot() {
  return (
    <svg width="330" height="305" viewBox="270 220 330 305" fill="none" role="img" aria-label="COFFEEPOT">
      <defs>
        <linearGradient id="bodyV" x1="0" y1="290" x2="0" y2="514" gradientUnits="userSpaceOnUse">
          <stop offset="0" stopColor="#8b959d" />
          <stop offset=".3" stopColor="#87929a" />
          <stop offset=".52" stopColor="#7e8991" />
          <stop offset=".72" stopColor="#656f77" />
          <stop offset=".88" stopColor="#474e54" />
          <stop offset="1" stopColor="#2c3034" />
        </linearGradient>
        <linearGradient id="bodyH" x1="280" y1="0" x2="584" y2="0" gradientUnits="userSpaceOnUse">
          <stop offset="0" stopColor="#2a2f34" stopOpacity=".4" />
          <stop offset=".1" stopColor="#2a2f34" stopOpacity=".08" />
          <stop offset=".6" stopColor="#2a2f34" stopOpacity="0" />
          <stop offset=".85" stopColor="#25292d" stopOpacity=".38" />
          <stop offset="1" stopColor="#1c1f22" stopOpacity=".7" />
        </linearGradient>
        <radialGradient id="shine">
          <stop offset="0" stopColor="#b0bcc5" stopOpacity=".75" />
          <stop offset=".4" stopColor="#a5b1ba" stopOpacity=".4" />
          <stop offset="1" stopColor="#98a4ad" stopOpacity="0" />
        </radialGradient>
        <linearGradient id="inside" x1="330" y1="0" x2="530" y2="0" gradientUnits="userSpaceOnUse">
          <stop offset="0" stopColor="#4f565c" />
          <stop offset=".22" stopColor="#6b747b" />
          <stop offset=".36" stopColor="#8f9aa2" />
          <stop offset=".46" stopColor="#a9b4bc" />
          <stop offset=".58" stopColor="#929da5" />
          <stop offset=".72" stopColor="#737d84" />
          <stop offset="1" stopColor="#6a747b" />
        </linearGradient>
        <linearGradient id="neck" x1="316" y1="0" x2="530" y2="0" gradientUnits="userSpaceOnUse">
          <stop offset="0" stopColor="#2c3034" />
          <stop offset=".1" stopColor="#454b51" />
          <stop offset=".16" stopColor="#697178" />
          <stop offset=".24" stopColor="#50565c" />
          <stop offset=".6" stopColor="#51575d" />
          <stop offset=".85" stopColor="#5c636a" />
          <stop offset="1" stopColor="#33383c" />
        </linearGradient>
        <clipPath id="bodyClip"><path d={BODY} /></clipPath>
        <filter id="soft"><feGaussianBlur stdDeviation="2.5" /></filter>
      </defs>

      <path d={BODY} fill="url(#bodyV)" />
      <g clipPath="url(#bodyClip)">
        <ellipse cx="345" cy="325" rx="65" ry="36" fill="url(#shine)" opacity=".75" />
        <ellipse cx="370" cy="390" rx="52" ry="44" fill="url(#shine)" opacity=".9" />
        <ellipse cx="452" cy="373" rx="58" ry="48" fill="url(#shine)" />
        <path d={BODY} fill="url(#bodyH)" />
        <path d="M336 296C385 316 470 313 522 292" stroke="#3b4146" strokeWidth="5" filter="url(#soft)" opacity=".6" />
        <path d="M350 304C395 317 455 318 500 307" stroke="#a7b2ba" strokeWidth="4" filter="url(#soft)" opacity=".8" />
        <path d="M388 311C415 315 440 315 462 312" stroke="#b4bfc7" />
      </g>

      <path d="M316 265L342 290C342 294 341 296 340 299C370 308 478 310 518 290V287L531 255C525 245 340 250 316 265z" fill="url(#neck)" />
      <path d="M315 263C323 261 329 258 333 253C338 242 381 233 428 233C480 233 529 240 530 254C530 268 485 280 427 280C398 279 368 276 350 269C337 265 327 268 316 266z" fill="#79838a" />
      <path d="M330 259C334 256 334 254 335 252C344 241 386 234 428 234C478 234 526 243 527 254C522 268 481 277 427 277C394 277 366 272 349 266C339 263 329 264 322 263z" fill="url(#inside)" />
      <path d="M365 271C396 266 455 266 490 271C467 277 390 277 365 271z" fill="#4b5358" filter="url(#soft)" />
      <path d="M333 265C355 270 390 279 427 279C485 279 528 267 530 255" stroke="#87919a" strokeWidth="1.5" />

      <g stroke="#2787ad">
        <path d="M313 258C318 255 324 256 330 252V247C335 235 378 227 428 227C480 227 526 235 529 246C528 263 482 271 427 272C395 273 365 269 350 264C340 260 325 262 316 261C314 260 313 259 313 258z" />
        <path d="M525 242C526 252 520 256 517 263" />
        <path d="M408 274.500h54" />
      </g>
      <path d="M408 276.500h28" stroke="#2c3a42" />

      <path d="M431 370V361" stroke="#3ce8f2" strokeWidth="2" />
      <path d="M431 370.5h10" stroke="#df3337" />
      <circle cx="431.5" cy="359.5" r="2.8" fill="#45e8f4" />
      <circle cx="428.5" cy="368.5" r="2.3" fill="#4ad34a" />
      <circle cx="442" cy="370" r="2.7" fill="#e8353b" />
    </svg>
  );
}

/* ---------- status bar ---------- */

function Watermark() {
  const letters: [string, number][] = [['ı', 17], ['C', 29], ['A', 56], ['X', 87]];
  return (
    <svg width="122" height="46" viewBox="0 0 122 46" className="absolute bottom-0 left-1" role="img" aria-label="ICAX www.icax.org">
      <defs>
        <linearGradient id="ice" x1="0" y1="0" x2="0" y2="1">
          <stop offset="0" stopColor="#a5e4f8" /><stop offset="1" stopColor="#2a9bd2" />
        </linearGradient>
      </defs>
      <path d="M2 36h115l-2 7.500H0z" fill="#1f95cc" stroke="#136288" strokeWidth=".7" />
      <g fontFamily="DejaVu Sans, sans-serif" fontSize="34" fontStyle="italic" strokeLinejoin="round">
        {letters.map(([ch, x]) => <text key={ch} x={x} y="34" stroke="#135a80" strokeWidth="3">{ch}</text>)}
        {letters.map(([ch, x]) => <text key={ch} x={x} y="34" fill="url(#ice)" stroke="url(#ice)" strokeWidth="1">{ch}</text>)}
      </g>
      <path d="M4 34C10 27 15 19 25 14" stroke="#135a80" strokeWidth="5" strokeLinecap="round" fill="none" />
      <path d="M4 34C10 27 15 19 25 14" stroke="#5fbfe6" strokeWidth="3" strokeLinecap="round" fill="none" />
      <ellipse cx="30" cy="6" rx="5.5" ry="4.5" fill="#ef9a43" stroke="#a95d1d" />
      <path d="M28 7c0-3 4-3 4-1s-2 2-3 1" stroke="#fff" fill="none" />
      <text x="58" y="43" textAnchor="middle" fontFamily="DejaVu Sans, sans-serif" fontSize="8" fontWeight="bold" fontStyle="italic" fill="#fff">
        WWW.ICAX.ORG
      </text>
    </svg>
  );
}

const Divider = () => <div className="w-px self-stretch bg-[#d0d1d4]" />;

function StatusBar() {
  return (
    <footer className="relative flex h-[33px] items-center border-t-2 border-[#9a9a9c] bg-[#efeff2] py-0.5">
      <button type="button" aria-label="导航器" className="ml-1.5 flex h-5 w-6 items-center justify-center border border-[#c9cacd]">
        <Svg w={14} h={12} crisp><path d="M1.5.5h3v3h-3zM1.5 7.5h3v3h-3zM9.5 5.5h3v3h-3z" stroke="#555" /></Svg>
      </button>
      <button type="button" aria-label="浏览器" className="ml-1.5 flex h-5 w-5 items-center justify-center border border-[#c9cacd]">
        <Svg w={16} h={14}><circle cx="8" cy="7" r="6.5" fill="#39a7c8" /><path d="M2 5c4-5 10-5 12 0-3 5-7 4-12 0z" fill="#7cc341" /><path d="M5 5l6 3" stroke="#f0d037" strokeWidth="2" /></Svg>
      </button>
      <div className="ml-1.5 h-full w-px bg-[#d0d1d4]" />
      <span className="ml-2 size-1 shrink-0 rounded-full bg-[#1515c8]" />
      <p className="ml-1.5 w-[248px] overflow-hidden whitespace-nowrap">
        <span className="text-[11px]">COFFEEPOT</span> 重新生成已完成，9 个隐含的特征或
      </p>
      <Divider />
      <div className="w-9" />
      <Divider />
      <div className="flex w-8 items-center justify-center gap-0.5">
        <span className="size-2.5 rounded-full bg-[#46cc46]" />
        <span className="size-1.5 rounded-full bg-[#ccc]" />
        <span className="size-1.5 rounded-full bg-[#ccc]" />
      </div>
      <Divider />
      <button type="button" aria-label="查找" className="mx-1 flex h-[22px] w-10 items-center justify-center rounded-[3px] border border-[#b5b6b9] bg-linear-to-b from-white to-[#e2e2e6]">
        <Svg w={17} h={15}>
          <path d="M4 1h3v3l1 1h1l1-1V1h3v3l3 5v5h-6V8H7v6H1V9l3-5z" fill="#222" />
          <path d="M3 9v4M5 5v2M12 9v4M12 5v2" stroke="#eee" />
        </Svg>
      </button>
      <Divider />
      <div className="relative mr-[18px] ml-auto">
        <select aria-label="选择过滤器" defaultValue="smart" className="h-5 w-[167px] appearance-none border border-[#c3c4c8] bg-linear-to-b from-[#f3f3f6] to-[#fcfcff] pl-1">
          <option value="smart">智能</option>
          <option value="feature">特征</option>
          <option value="geometry">几何</option>
        </select>
        <span className="pointer-events-none absolute inset-y-0 right-0 flex w-[15px] items-center justify-center border-l border-[#c3c4c8]"><Caret /></span>
      </div>
      <Watermark />
    </footer>
  );
}

export default function App() {
  return (
    <div className="flex min-h-screen flex-col border border-[#5f5f61] bg-[#fcfcff] font-['Noto_Sans','Noto_Sans_CJK_SC',sans-serif] text-xs text-[#3a3a3c]">
      <div className="flex flex-1 flex-col border-3 border-[#979797]">
        <TitleBar />
        <TabBar />
        <Ribbon />
        <main className="flex flex-1 items-start">
          <TreePanel />
          <ViewToolbar />
          <div className="min-w-0 flex-1 pt-[54px] pl-[76px]"><Pot /></div>
        </main>
        <StatusBar />
      </div>
    </div>
  );
}
